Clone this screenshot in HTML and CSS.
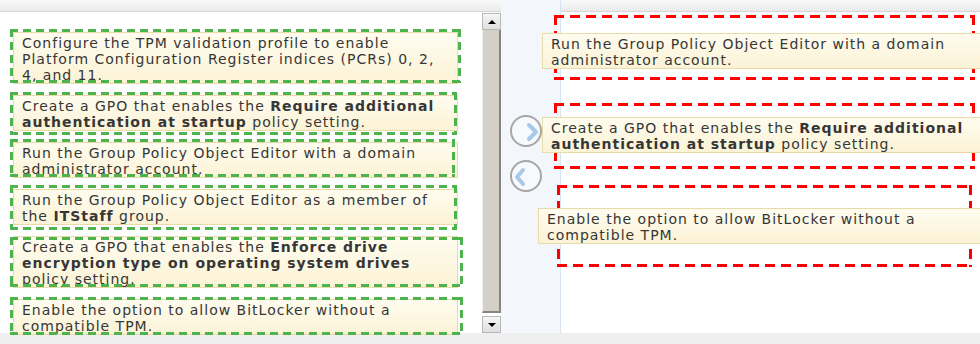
FILE: index.html
```html
<!DOCTYPE html>
<html>
	<head>
		<meta charset="UTF-8">
		<title>Build List</title>
		<link rel="stylesheet" href="styles.css">
	</head>
	<body>

<div class="screen">
    <div class="main">
        <!--左边 可选步骤-->
        <div class="source">
            <div class="bar-top"></div>
            <div class="source-body">
                <div class="list">
                    <div class="src s1">
                        <div class="card">Configure the TPM validation profile to enable<br>Platform Configuration Register indices (PCRs) 0, 2,<br>4, and 11.</div>
                    </div>
                    <div class="src s2">
                        <div class="card">Create a GPO that enables the <b>Require additional<br>authentication at startup</b> policy setting.</div>
                    </div>
                    <div class="src s3">
                        <div class="card">Run the Group Policy Object Editor with a domain<br>administrator account.</div>
                    </div>
                    <div class="src s4">
                        <div class="card">Run the Group Policy Object Editor as a member of<br>the <b>ITStaff</b> group.</div>
                    </div>
                    <div class="src s5">
                        <div class="card">Create a GPO that enables the <b>Enforce drive<br>encryption type on operating system drives</b><br>policy setting.</div>
                    </div>
                    <div class="src s6">
                        <div class="card">Enable the option to allow BitLocker without a<br>compatible TPM.</div>
                    </div>
                </div>
                <!--滚动条-->
                <div class="scroll">
                    <div class="scroll-btn"></div>
                    <div class="scroll-thumb"></div>
                    <div class="scroll-btn down"></div>
                </div>
            </div>
        </div>

        <!--中间 移动按钮-->
        <div class="mid">
            <div class="move">
                <svg width="28" height="28" viewBox="0 0 28 28"><polyline points="17,8 24,15 17,22" /></svg>
            </div>
            <div class="move">
                <svg width="28" height="28" viewBox="0 0 28 28"><polyline points="11,8 5,15 11,22" /></svg>
            </div>
        </div>

        <!--右边 答案区-->
        <div class="target">
            <div class="bar-top bar-right"></div>
            <div class="drop d1">
                <div class="card">Run the Group Policy Object Editor with a domain<br>administrator account.</div>
            </div>
            <div class="drop d2">
                <div class="card">Create a GPO that enables the <b>Require additional<br>authentication at startup</b> policy setting.</div>
            </div>
            <div class="drop d3">
                <div class="card">Enable the option to allow BitLocker without a<br>compatible TPM.</div>
            </div>
        </div>
    </div>
    <div class="bar-bottom"></div>
</div>

</body>
</html>
```

FILE: styles.css
```css
* {
    padding: 0;
    margin: 0;
    box-sizing: border-box;
}

body {
    font: 14px/16px "DejaVu Sans", Verdana, sans-serif;
    letter-spacing: 1px;
    color: #363636;
    background: #fff;
    overflow: hidden;
}

.screen {
    width: 980px;
    height: 344px;
    display: flex;
    flex-direction: column;
    overflow: hidden;
}

.main {
    height: 333px;
    flex: none;
    display: flex;
}

.bar-top {
    height: 12px;
    flex: none;
    background: linear-gradient(#f9f9f9, #ebebeb);
    border-bottom: 1px solid #d6d6d6;
}

.bar-bottom {
    flex: 1;
    background: #efefef;
}

/* left list */
.source {
    width: 501px;
    flex: none;
    display: flex;
    flex-direction: column;
}

.source-body {
    flex: 1;
    display: flex;
    min-height: 0;
}

.list {
    flex: 1;
    padding: 20px 0 0 13px;
    display: flex;
    flex-direction: column;
    gap: 11px;
}

.card {
    background: linear-gradient(#fffcef, #fbf3d6);
    border: 1px solid #e6dba9;
    padding: 2px 8px 0;
    white-space: nowrap;
}

.src {
    position: relative;
    width: 445px;
    flex: none;
}

.src::after {
    content: "";
    position: absolute;
    top: var(--t);
    bottom: var(--b);
    left: -3px;
    right: var(--r);
    --g: #4db34d;
    background:
        repeating-linear-gradient(90deg, var(--g) 0 8px, transparent 8px 13px) left top / 100% 3px no-repeat,
        repeating-linear-gradient(90deg, var(--g) 0 8px, transparent 8px 13px) left bottom / 100% 3px no-repeat,
        repeating-linear-gradient(var(--g) 0 8px, transparent 8px 13px) left top / 3px 100% no-repeat,
        repeating-linear-gradient(var(--g) 0 8px, transparent 8px 13px) right top / 3px 100% no-repeat;
}

.s1 { --t: -3px; --b: 1px; --r: -3px; }
.s2 { --t: -3px; --b: -4px; --r: 1px; }
.s3 { --t: -3px; --b: 1px; --r: 3px; }
.s4 { --t: -4px; --b: -5px; --r: 1px; }
.s5 { --t: 1px; --b: 1px; --r: -5px; }
.s6 { --t: -2px; --b: 0px; --r: -5px; }

/* scrollbar */
.scroll {
    width: 19px;
    flex: none;
    padding-top: 1px;
    display: flex;
    flex-direction: column;
}

.scroll-btn {
    height: 17px;
    flex: none;
    background: linear-gradient(#f6f6f6, #dedede);
    border: 1px solid #b8b8b8;
    display: flex;
    align-items: center;
    justify-content: center;
}

.scroll-btn::before {
    content: "";
    border-left: 4px solid transparent;
    border-right: 4px solid transparent;
    border-bottom: 4px solid #000;
}

.scroll-btn.down::before {
    border-bottom: 0;
    border-top: 4px solid #000;
}

.scroll-thumb {
    flex: 1;
    background: #d4d0c8;
    border-left: 1px solid #f2f2f2;
    border-right: 2px solid #858585;
    border-bottom: 2px solid #858585;
    margin-bottom: 3px;
}

/* middle buttons */
.mid {
    width: 60px;
    flex: none;
    background: #f3f6fb;
    border-right: 1px solid #d8e3f0;
    padding: 115px 0 0 9px;
    display: flex;
    flex-direction: column;
    gap: 13px;
}

.move {
    width: 32px;
    height: 32px;
    border: 2px solid #a6a6a6;
    border-radius: 50%;
    background: #f8f9fc;
}

.move svg {
    display: block;
}

.move polyline {
    fill: none;
    stroke: #a7c9e8;
    stroke-width: 4;
    stroke-linecap: round;
    stroke-linejoin: round;
}

/* right answer area */
.target {
    flex: 1;
    min-width: 0;
    display: flex;
    flex-direction: column;
}

.drop {
    margin: 0 5px 0 -7px;
    --red: #ff0000;
    background:
        repeating-linear-gradient(90deg, var(--red) 0 10px, transparent 10px 16px) left top / 100% 3px no-repeat,
        repeating-linear-gradient(90deg, var(--red) 0 10px, transparent 10px 16px) left bottom / 100% 3px no-repeat,
        repeating-linear-gradient(var(--red) 0 10px, transparent 10px 16px) left top / 3px 100% no-repeat,
        repeating-linear-gradient(var(--red) 0 10px, transparent 10px 16px) right top / 3px 100% no-repeat;
}

.drop .card {
    margin: 0 -10px 0 -12px;
}

.d1 {
    margin-top: 3px;
    padding: 18px 0 11px;
}

.d2 {
    margin-top: 23px;
    padding: 14px 0 16px;
}

.d3 {
    margin: 16px 8px 0 -4px;
    padding: 23px 0;
}

.d3 .card {
    margin-left: -19px;
}
```
